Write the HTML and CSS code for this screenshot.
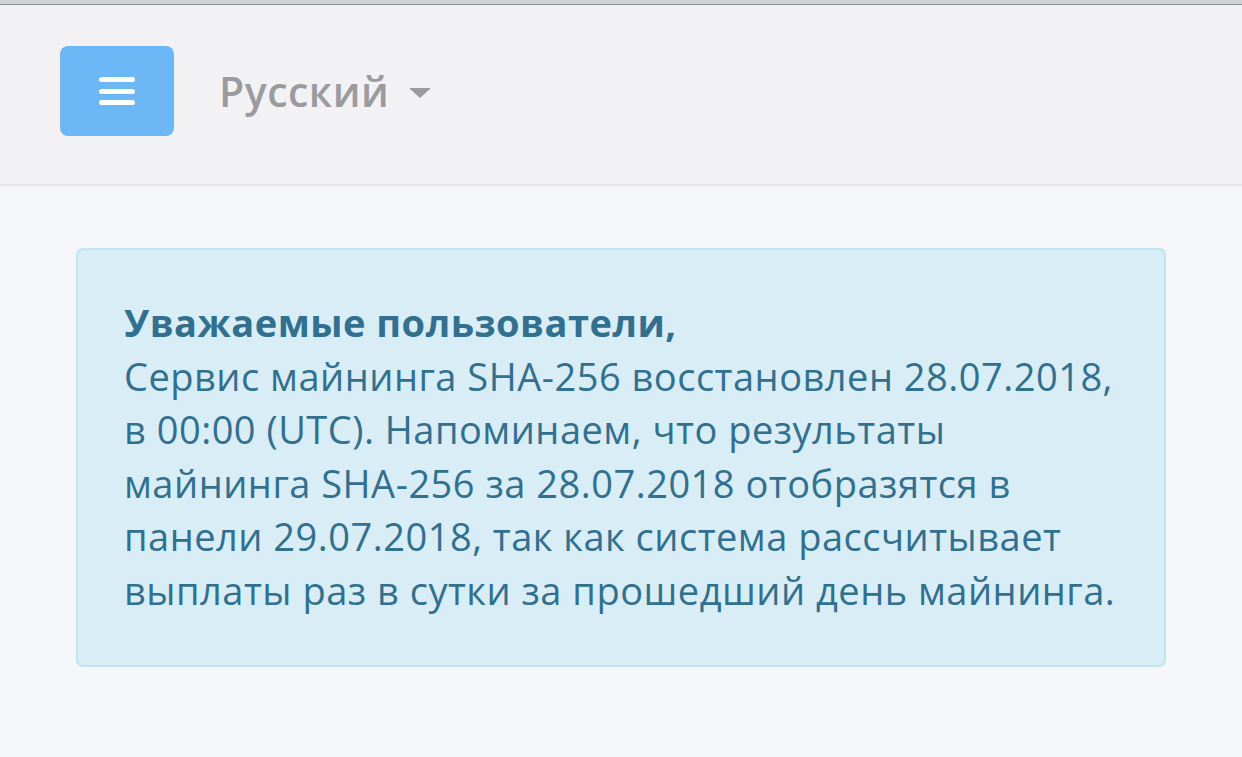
FILE: index.html
```html
<!DOCTYPE html>
<html lang="ru">
<head>
  <meta charset="UTF-8" />
  <meta name="viewport" content="width=device-width, initial-scale=1.0"/>
  <title>Пул майнинга</title>
  <link rel="stylesheet" href="styles.css">
</head>
<body>

<div class="topbar"></div>

<header class="header">
  <button class="menu-btn" aria-label="Меню">
    <span></span>
    <span></span>
    <span></span>
  </button>
  <div class="lang">
    Русский
    <span class="caret"></span>
  </div>
</header>

<main class="content">
  <div class="alert">
    <strong>Уважаемые пользователи,</strong><br>
    Сервис майнинга SHA-256 восстановлен 28.07.2018, в 00:00 (UTC). Напоминаем, что результаты майнинга SHA-256 за 28.07.2018 отобразятся в панели 29.07.2018, так как система рассчитывает выплаты раз в сутки за прошедший день майнинга.
  </div>
</main>

</body>
</html>
```

FILE: styles.css
```css
body {
  margin: 0;
  font-family: 'Open Sans', 'Noto Sans', sans-serif;
  background: #f4f6f9;
  min-height: 100vh;
}

.topbar {
  height: 4px;
  background: #cfd2d5;
  border-bottom: 1px solid #8d9093;
}

.header {
  box-sizing: border-box;
  height: 181px;
  padding: 41px 60px 0;
  display: flex;
  align-items: flex-start;
  background: #f2f2f4;
  border-bottom: 2px solid #e5e5e8;
}

.menu-btn {
  width: 114px;
  height: 90px;
  border: none;
  border-radius: 8px;
  background: #6cb8f7;
  display: flex;
  flex-direction: column;
  align-items: center;
  justify-content: center;
  gap: 6.5px;
  padding: 0;
  cursor: pointer;
}

.menu-btn span {
  display: block;
  width: 36px;
  height: 5px;
  border-radius: 3px;
  background: #fff;
}

.lang {
  margin-left: 45px;
  height: 90px;
  display: flex;
  align-items: center;
  gap: 20px;
  font-size: 41px;
  letter-spacing: 0.5px;
  font-weight: 600;
  color: #9b9b9f;
}

.caret {
  width: 0;
  height: 0;
  border-left: 11px solid transparent;
  border-right: 11px solid transparent;
  border-top: 10px solid #9b9b9f;
  margin-top: 4px;
}

.content {
  padding: 62px 76px;
}

.alert {
  padding: 46px 44px 48px 46px;
  border: 2px solid #bde5ef;
  border-radius: 7px;
  background: #d9edf6;
  color: #31708f;
  font-size: 38px;
  letter-spacing: 0.5px;
  line-height: 53.5px;
}

.alert strong {
  font-weight: 700;
}
```
